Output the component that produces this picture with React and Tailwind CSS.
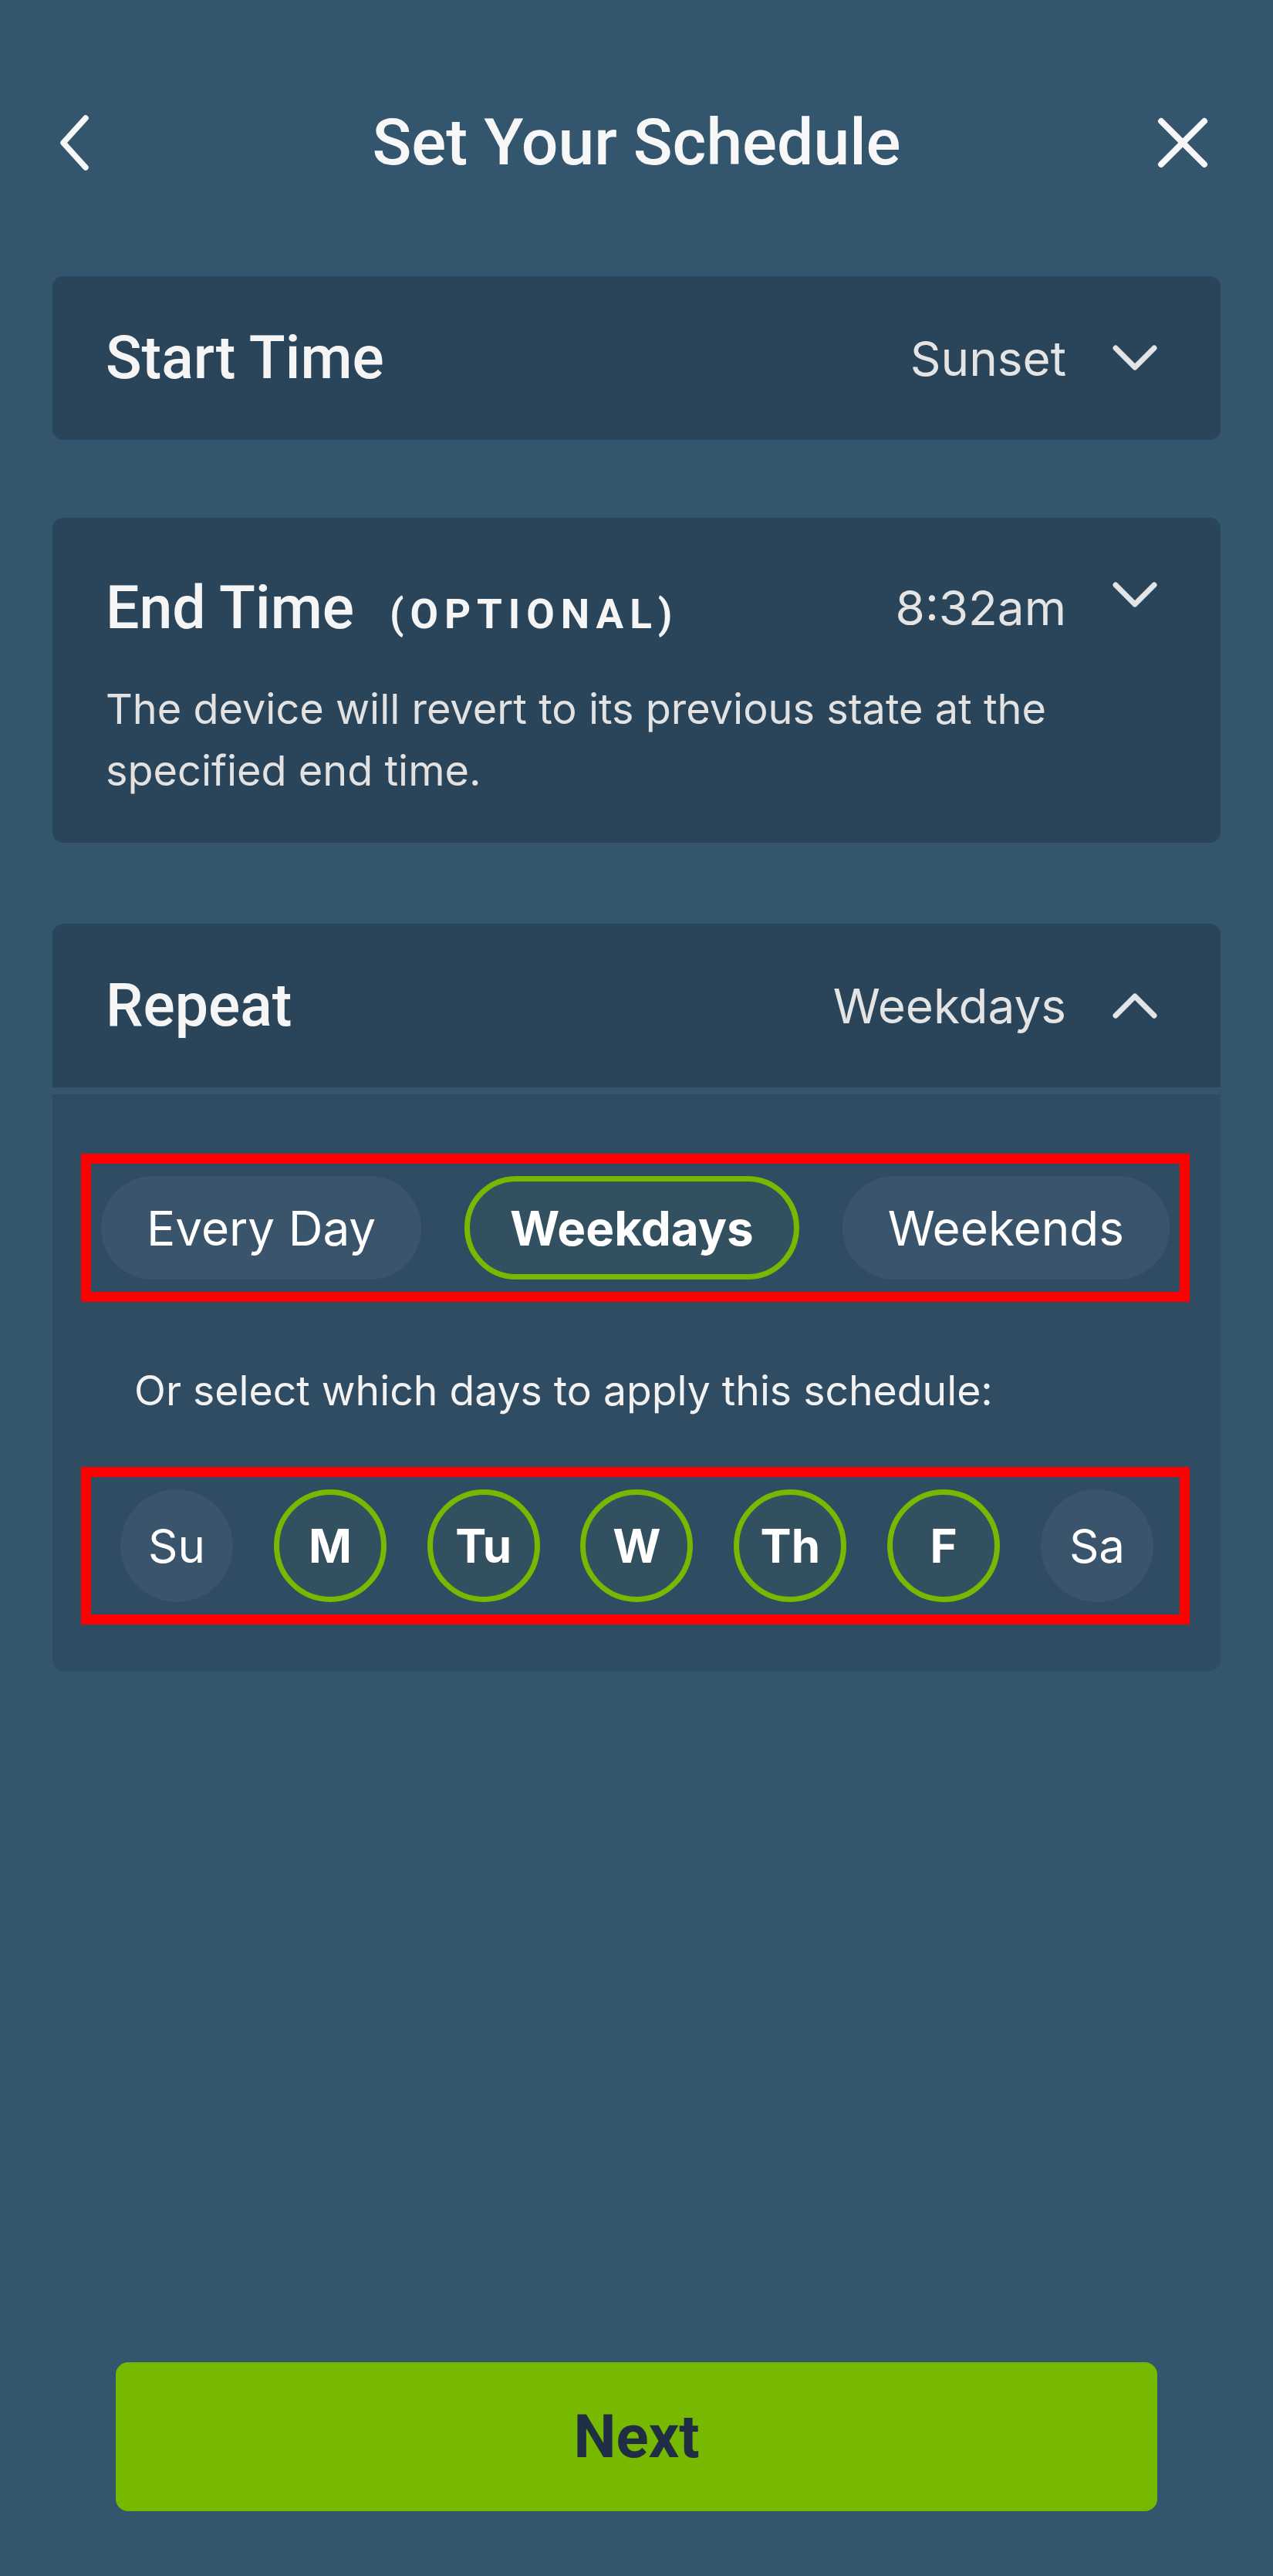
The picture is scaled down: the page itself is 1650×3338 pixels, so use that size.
import React, { useState } from "react";

const days = [
  { key: "su", label: "Su" },
  { key: "mo", label: "M" },
  { key: "tu", label: "Tu" },
  { key: "we", label: "W" },
  { key: "th", label: "Th" },
  { key: "fr", label: "F" },
  { key: "sa", label: "Sa" },
];

const presets = ["Every Day", "Weekdays", "Weekends"];

const heading = { fontFamily: "Roboto, 'Noto Sans', sans-serif" };
const body = { fontFamily: "Inter, 'Noto Sans', sans-serif" };

function Chevron({ up = false }) {
  return (
    <svg width="58" height="34" viewBox="0 0 58 34" fill="none" className="shrink-0">
      <path
        d={up ? "M4 30 L29 5 L54 30" : "M4 4 L29 29 L54 4"}
        stroke="#e2e4e6"
        strokeWidth="7"
        strokeLinecap="round"
        strokeLinejoin="round"
      />
    </svg>
  );
}

export default function App() {
  const [preset, setPreset] = useState("Weekdays");
  const [selected, setSelected] = useState(["mo", "tu", "we", "th", "fr"]);

  const toggleDay = (key) => {
    setSelected((prev) =>
      prev.includes(key) ? prev.filter((d) => d !== key) : [...prev, key]
    );
  };

  return (
    <div className="min-h-[3338px] w-full bg-[#34556e] flex flex-col text-white" style={body}>
      {/* Top bar */}
      <div className="grid grid-cols-[1fr_auto_1fr] items-center h-[130px] mt-[120px] px-[72px]">
        <button className="justify-self-start">
          <svg width="48" height="80" viewBox="0 0 48 80" fill="none">
            <path
              d="M39 8 L10 40 L39 72"
              stroke="#f7f7f7"
              strokeWidth="7.5"
              strokeLinecap="round"
              strokeLinejoin="round"
            />
          </svg>
        </button>
        <h1 className="text-[84px] font-medium leading-none text-[#f7f7f7]" style={heading}>
          Set Your Schedule
        </h1>
        <button className="justify-self-end mr-[12px]">
          <svg width="66" height="66" viewBox="0 0 66 66" fill="none">
            <path
              d="M5 5 L61 61 M61 5 L5 61"
              stroke="#f7f7f7"
              strokeWidth="8"
              strokeLinecap="round"
            />
          </svg>
        </button>
      </div>

      {/* Start time */}
      <div className="mx-[68px] mt-[108px] h-[212px] rounded-[14px] bg-[#2a4559] pl-[69px] pr-[82px] flex items-center justify-between">
        <span className="text-[77px] leading-[90px] font-medium text-[#f5f5f5]" style={heading}>
          Start Time
        </span>
        <div className="flex items-center gap-[60px]">
          <span className="text-[62px] text-[#e4e4e4]">Sunset</span>
          <Chevron />
        </div>
      </div>

      {/* End time */}
      <div className="mx-[68px] mt-[101px] h-[421px] rounded-[14px] bg-[#2a4559] pl-[69px] pr-[82px] pt-[72px]">
        <div className="flex items-start justify-between">
          <div className="flex items-baseline gap-[46px]">
            <span className="text-[77px] leading-[90px] font-medium text-[#f5f5f5]" style={heading}>
              End Time
            </span>
            <span className="text-[53px] font-bold tracking-[0.15em] text-[#f5f5f5]" style={heading}>
              (OPTIONAL)
            </span>
          </div>
          <div className="flex items-start gap-[60px]">
            <span className="text-[62px] leading-[90px] text-[#e4e4e4]">8:32am</span>
            <div className="pt-[11px]">
              <Chevron />
            </div>
          </div>
        </div>
        <p className="mt-[42px] text-[54px] leading-[80px] text-[#e2e2e2]">
          The device will revert to its previous state at the specified end time.
        </p>
      </div>

      {/* Repeat */}
      <div className="mx-[68px] mt-[105px] flex flex-col gap-[9px]">
        <div className="h-[212px] rounded-t-[14px] bg-[#2a4559] pl-[69px] pr-[82px] flex items-center justify-between">
          <span className="text-[77px] leading-[90px] font-medium text-[#f5f5f5]" style={heading}>
            Repeat
          </span>
          <div className="flex items-center gap-[60px]">
            <span className="text-[62px] text-[#e4e4e4]">Weekdays</span>
            <Chevron up />
          </div>
        </div>

        <div className="h-[747px] rounded-b-[14px] bg-[#2f4c62] pt-[77px]">
          <div className="ml-[37px] mr-[40px] h-[192px] border-[13px] border-[#ff0000] px-[13px] flex items-center justify-between">
            {presets.map((p) => {
              const active = p === preset;
              return (
                <button
                  key={p}
                  onClick={() => setPreset(p)}
                  className={
                    active
                      ? "h-[134px] px-[52px] rounded-full border-[7px] border-[#76b900] bg-[#32505f] text-[62px] font-bold text-white"
                      : "h-[134px] px-[59px] rounded-full bg-[#3a546c] text-[62px] text-white"
                  }
                >
                  {p}
                </button>
              );
            })}
          </div>

          <p className="mt-[80px] pl-[106px] text-[53.5px] leading-[70px] text-[#f2f2f2]">
            Or select which days to apply this schedule:
          </p>

          <div className="mt-[64px] ml-[37px] mr-[40px] h-[204px] border-[13px] border-[#ff0000] pl-[38px] pr-[34px] flex items-center justify-between">
            {days.map((d) => {
              const on = selected.includes(d.key);
              return (
                <button
                  key={d.key}
                  onClick={() => toggleDay(d.key)}
                  className={
                    on
                      ? "w-[146px] h-[146px] rounded-full border-[7px] border-[#76b900] bg-[#32505f] flex items-center justify-center text-[60px] font-bold text-white"
                      : "w-[146px] h-[146px] rounded-full bg-[#3a546c] flex items-center justify-center text-[60px] text-white"
                  }
                >
                  {d.label}
                </button>
              );
            })}
          </div>
        </div>
      </div>

      <div className="flex-1" />

      {/* Footer action */}
      <div className="px-[150px] pb-[84px]">
        <button
          className="w-full h-[193px] rounded-[16px] bg-[#76b900] text-[78px] font-bold text-[#1f2e44]"
          style={heading}
        >
          Next
        </button>
      </div>
    </div>
  );
}
